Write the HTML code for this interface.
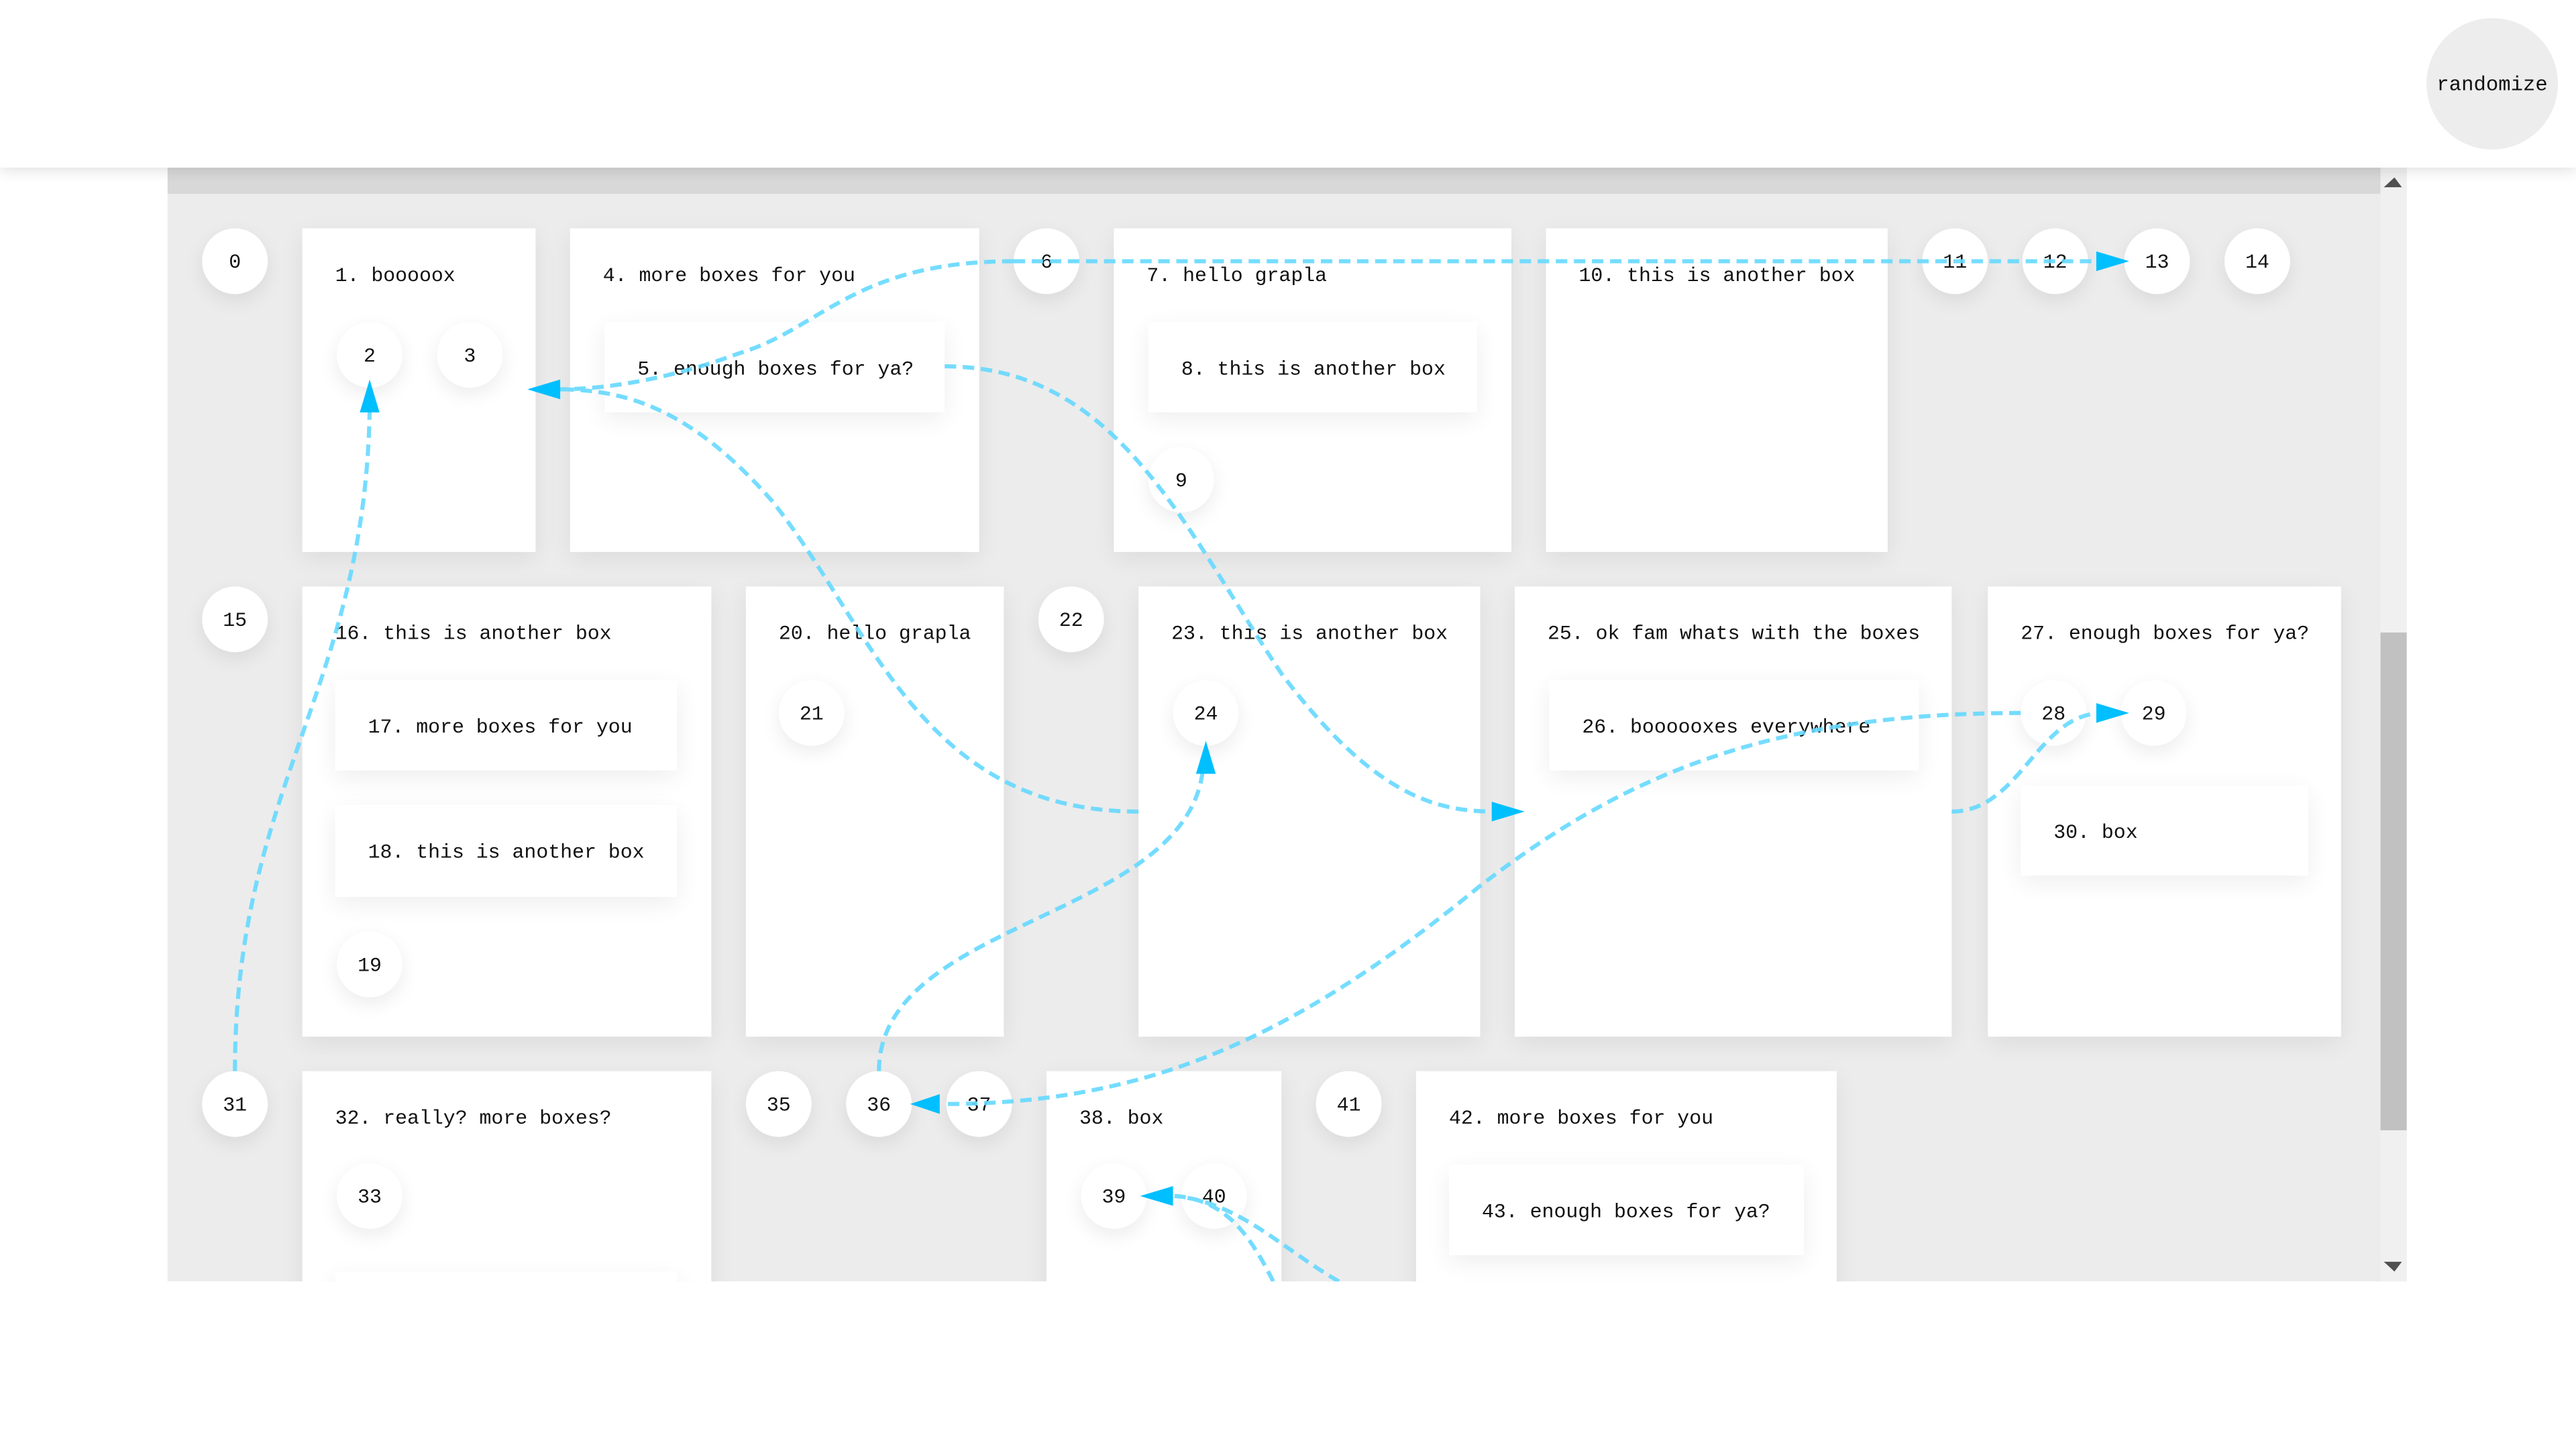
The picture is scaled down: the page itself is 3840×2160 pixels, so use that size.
<!DOCTYPE html>
<html><head><meta charset="utf-8">
<style>
html,body{margin:0;padding:0;width:3840px;height:2160px;overflow:hidden;background:#fff;}
#w{position:absolute;left:0;top:0;width:1568px;height:882px;transform:scale(2.44898);transform-origin:0 0;font-family:"Liberation Mono","DejaVu Sans Mono",monospace;font-size:12.2px;color:#111;}
.hdr{position:absolute;left:0;top:0;width:1568px;height:102px;background:#fff;box-shadow:0 2px 8px rgba(0,0,0,.12);z-index:3}
.rnd{position:absolute;left:1477px;top:11px;width:80px;height:80px;border-radius:50%;background:#ededed;display:flex;align-items:center;justify-content:center;font-size:12.5px;padding-top:2px;box-sizing:border-box}
.sc{position:absolute;left:102px;top:102px;width:1363px;height:678px;background:#ececec;overflow:hidden}
.strip{position:absolute;left:0;top:0;width:1347px;height:16px;background:#d8d8d8}
.vbar{position:absolute;left:1347px;top:0;width:16px;height:678px;background:#f0f0f0}
.thumb{position:absolute;left:1347px;top:283px;width:16px;height:303px;background:#c1c1c1}
.b{position:absolute;background:#fff;box-shadow:0 4px 14px rgba(0,0,0,.07)}
.b>span{position:absolute;left:20px;top:22px;white-space:nowrap}
.c{position:absolute;width:40px;height:40px;border-radius:50%;background:#fff;box-shadow:0 4px 12px rgba(0,0,0,.08);display:flex;align-items:center;justify-content:center;padding-top:2px;box-sizing:border-box}
svg{position:absolute;left:0;top:0}
</style></head><body><div id="w">
<div class="hdr"><div class="rnd">randomize</div></div>
<div class="sc">
<div class="strip"></div>
<div class="vbar"></div><div class="thumb"></div>
<svg width="1363" height="678" style="z-index:2">
<polygon points="1349,12 1360,12 1355.5,6" fill="#505050"/>
<polygon points="1349,666 1360,666 1355.5,672" fill="#505050"/>
</svg>
</div>
<div style="position:absolute;left:0;top:102px;width:1568px;height:678px;overflow:hidden">
<div style="position:absolute;left:0;top:-102px;width:1568px;height:882px">
<div class="b" style="left:184px;top:139px;width:142px;height:197px"><span>1. booooox</span></div>
<div class="b" style="left:347px;top:139px;width:249px;height:197px"><span>4. more boxes for you</span></div>
<div class="b" style="left:368px;top:196px;width:207px;height:55px"><span>5. enough boxes for ya?</span></div>
<div class="b" style="left:678px;top:139px;width:242px;height:197px"><span>7. hello grapla</span></div>
<div class="b" style="left:699px;top:196px;width:200px;height:55px"><span>8. this is another box</span></div>
<div class="b" style="left:941px;top:139px;width:208px;height:197px"><span>10. this is another box</span></div>
<div class="b" style="left:184px;top:357px;width:249px;height:274px"><span>16. this is another box</span></div>
<div class="b" style="left:204px;top:414px;width:208px;height:55px"><span>17. more boxes for you</span></div>
<div class="b" style="left:204px;top:490px;width:208px;height:56px"><span>18. this is another box</span></div>
<div class="b" style="left:454px;top:357px;width:157px;height:274px"><span>20. hello grapla</span></div>
<div class="b" style="left:693px;top:357px;width:208px;height:274px"><span>23. this is another box</span></div>
<div class="b" style="left:922px;top:357px;width:266px;height:274px"><span>25. ok fam whats with the boxes</span></div>
<div class="b" style="left:943px;top:414px;width:225px;height:55px"><span>26. boooooxes everywhere</span></div>
<div class="b" style="left:1210px;top:357px;width:215px;height:274px"><span>27. enough boxes for ya?</span></div>
<div class="b" style="left:1230px;top:478px;width:175px;height:55px"><span>30. box</span></div>
<div class="b" style="left:184px;top:652px;width:249px;height:200px"><span>32. really? more boxes?</span></div>
<div class="b" style="left:204px;top:774px;width:208px;height:55px"></div>
<div class="b" style="left:637px;top:652px;width:143px;height:200px"><span>38. box</span></div>
<div class="b" style="left:862px;top:652px;width:256px;height:200px"><span>42. more boxes for you</span></div>
<div class="b" style="left:882px;top:709px;width:216px;height:55px"><span>43. enough boxes for ya?</span></div>
<div class="c" style="left:123px;top:139px">0</div>
<div class="c" style="left:205px;top:196px">2</div>
<div class="c" style="left:266px;top:196px">3</div>
<div class="c" style="left:617px;top:139px">6</div>
<div class="c" style="left:699px;top:272px">9</div>
<div class="c" style="left:1170px;top:139px">11</div>
<div class="c" style="left:1231px;top:139px">12</div>
<div class="c" style="left:1293px;top:139px">13</div>
<div class="c" style="left:1354px;top:139px">14</div>
<div class="c" style="left:123px;top:357px">15</div>
<div class="c" style="left:205px;top:567px">19</div>
<div class="c" style="left:474px;top:414px">21</div>
<div class="c" style="left:632px;top:357px">22</div>
<div class="c" style="left:714px;top:414px">24</div>
<div class="c" style="left:1230px;top:414px">28</div>
<div class="c" style="left:1291px;top:414px">29</div>
<div class="c" style="left:123px;top:652px">31</div>
<div class="c" style="left:205px;top:708px">33</div>
<div class="c" style="left:454px;top:652px">35</div>
<div class="c" style="left:515px;top:652px">36</div>
<div class="c" style="left:576px;top:652px">37</div>
<div class="c" style="left:658px;top:708px">39</div>
<div class="c" style="left:719px;top:708px">40</div>
<div class="c" style="left:801px;top:652px">41</div>
<svg width="1568" height="882">
<g fill="none" stroke="#66d9ff" stroke-width="2.5" stroke-dasharray="7 4" opacity=".9">
<path d="M617,159 L1293,159"/>
<path d="M617,159 C520,159 500,200 450,215 C410,230 370,237 340,237"/>
<path d="M575,223 C680,223 720,320 780,410 C840,490 880,494 912,494"/>
<path d="M693,494 C560,494 530,380 470,305 C420,248 380,237 340,237"/>
<path d="M143,652 C143,480 222,420 225,250"/>
<path d="M535,652 C535,560 720,560 732,470"/>
<path d="M1230,434 C1080,434 990,470 900,540 C790,630 700,672 575,672"/>
<path d="M1188,494 C1230,494 1240,434 1280,434"/>
<path d="M775,780 C760,750 745,730 715,728"/>
<path d="M815,780 C780,760 755,732 715,728"/>
</g>
<g fill="#00bfff">
<polygon points="1296,159 1276,153 1276,165"/>
<polygon points="321,237 341,231 341,243"/>
<polygon points="928,494 908,488 908,500"/>
<polygon points="225,231 219,251 231,251"/>
<polygon points="734,451 728,471 740,471"/>
<polygon points="554,672 572,666 572,678"/>
<polygon points="1296,434 1276,428 1276,440"/>
<polygon points="694,728 714,722 714,734"/>
</g>
</svg>
</div></div>
</div></body></html>
